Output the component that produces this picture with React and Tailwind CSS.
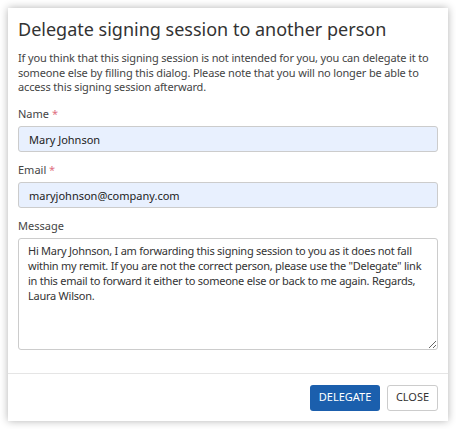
export default function App() {
  return (
    <div className="min-h-[429px] w-[456px] bg-white p-2" style={{ fontFamily: '"Noto Sans", "Open Sans", sans-serif' }}>
      <div className="flex h-[413px] w-[440px] flex-col bg-white shadow-[0_0_8px_rgba(0,0,0,0.3)]">
        <div className="flex flex-1 flex-col px-[10px] pt-[8px]">
          <h1 className="text-[18px] leading-[26px] text-[#333]">Delegate signing session to another person</h1>
          <p className="mt-[9px] text-[11px] leading-[14.7px] tracking-[-0.15px] text-[#444]">
            If you think that this signing session is not intended for you, you can delegate it to someone else by filling this dialog. Please note that you will no longer be able to access this signing session afterward.
          </p>
          <label className="mt-[11px] text-[11px] leading-[16px] text-[#444]">
            Name <span className="text-[#e0707f]">*</span>
          </label>
          <input
            readOnly
            value="Mary Johnson"
            className="mt-[4px] h-[26px] w-full rounded-[3px] border border-[#ccc] bg-[#e8f0fe] px-[10px] text-[11px] text-[#222] outline-none"
          />
          <label className="mt-[10px] text-[11px] leading-[16px] text-[#444]">
            Email <span className="text-[#e0707f]">*</span>
          </label>
          <input
            readOnly
            value="maryjohnson@company.com"
            className="mt-[4px] h-[26px] w-full rounded-[3px] border border-[#ccc] bg-[#e8f0fe] px-[10px] text-[11px] text-[#222] outline-none"
          />
          <label className="mt-[10px] text-[11px] leading-[16px] text-[#444]">Message</label>
          <textarea
            readOnly
            value={'Hi Mary Johnson, I am forwarding this signing session to you as it does not fall within my remit. If you are not the correct person, please use the "Delegate" link in this email to forward it either to someone else or back to me again. Regards, Laura Wilson.'}
            className="mt-[4px] h-[112px] w-full resize-y rounded-[3px] border border-[#ccc] bg-white px-[9px] py-[4px] text-[11px] leading-[15px] tracking-[-0.25px] text-[#333] outline-none"
          />
        </div>
        <div className="flex h-[48px] items-center justify-end gap-[7px] border-t border-[#e5e5e5] px-[10px]">
          <button className="h-[26px] w-[70px] rounded-[3px] bg-[#1b5fad] text-[11px] text-white">DELEGATE</button>
          <button className="h-[26px] w-[51px] rounded-[3px] border border-[#ccc] bg-white text-[11px] text-[#333]">CLOSE</button>
        </div>
      </div>
    </div>
  );
}
